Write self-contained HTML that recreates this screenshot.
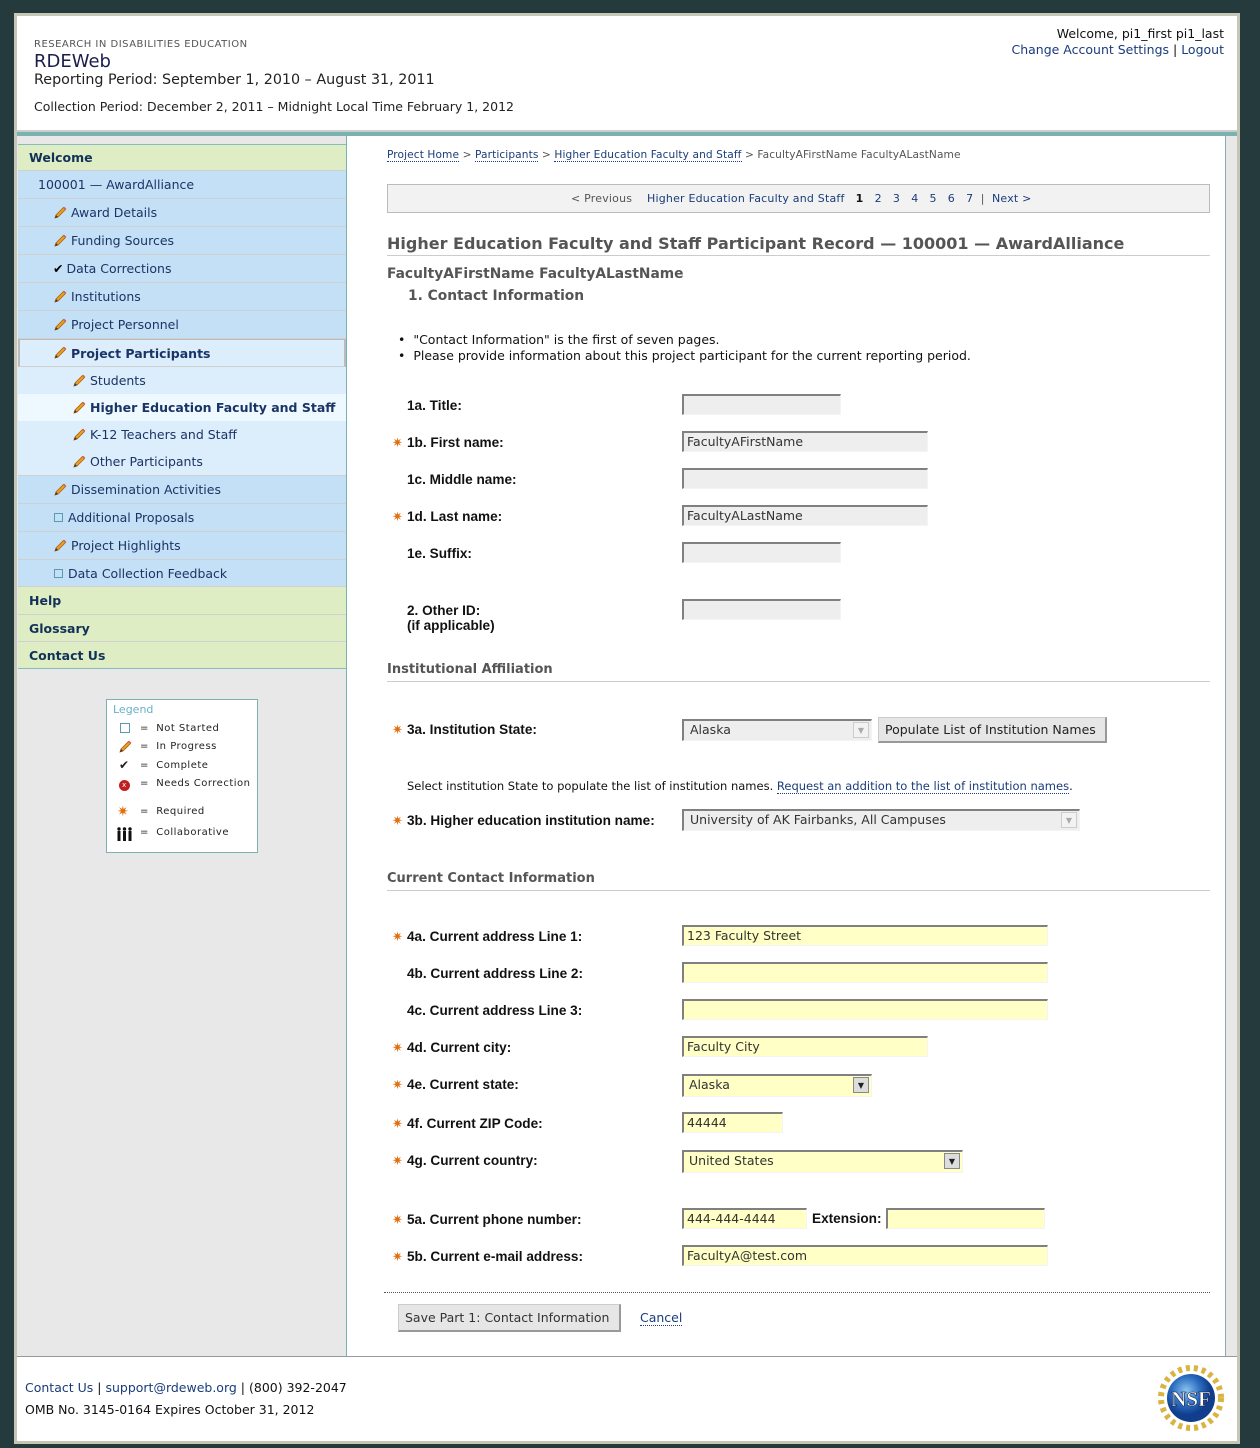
<!DOCTYPE html>
<html><head><meta charset="utf-8"><style>
*{margin:0;padding:0;box-sizing:border-box}
body{width:1260px;height:1448px;background:#253a3c;position:relative;overflow:hidden;font-family:"DejaVu Sans","Liberation Sans",sans-serif;color:#111}
.a{position:absolute;white-space:nowrap}
#box{position:absolute;left:14px;top:13px;width:1226px;height:1431px;background:#fff;border:3px solid #c6c6b6}
.nav{position:absolute;left:18px;width:328px;font-size:12.5px;color:#1a3466;border-bottom:1px solid #d0d0d0;display:flex;align-items:center}
.g{background:#deedc4;font-weight:bold;padding-left:11px;color:#123158}
.b{background:#c3e0f6}
.l{background:#dcedfb}
.pn{width:14px;height:14px;margin-right:4px;flex:none}
.lab{position:absolute;left:407px;font-family:"Liberation Sans",sans-serif;font-weight:bold;font-size:13.6px;color:#111;white-space:nowrap}
.st{position:absolute;left:392px;color:#e07010;font-size:13px;font-weight:bold}
.in{position:absolute;height:21px;background:#eee;border-top:2px solid #808080;border-left:2px solid #808080;border-right:1px solid #f4f4f4;border-bottom:1px solid #f4f4f4;font-family:"DejaVu Sans",sans-serif;font-size:12.5px;color:#333;padding:1px 3px;white-space:nowrap}
.y{background:#ffffc6}
.sel .ar{position:absolute;right:2px;top:1px;width:16px;height:16px;border:1px solid #888;background:#ddd;font-size:8px;text-align:center;line-height:15px;color:#222}
.sec{position:absolute;left:387px;width:823px;font-family:"DejaVu Sans",sans-serif;font-weight:bold;font-size:13px;color:#555;border-bottom:1px solid #ccc;padding-bottom:4px}
a{color:#1a3c7a}
.u{border-bottom:1px dotted #1a3c7a}
</style></head><body>
<svg width="0" height="0" style="position:absolute"><defs><g id="pen"><path d="M2 12 L3 9 L10.5 1.5 L12.5 3.5 L5 11 Z" fill="#f0a020" stroke="#a86010" stroke-width=".8"/><path d="M10.5 1.5 L12.5 3.5 L13.3 2.7 L11.3 0.7Z" fill="#e06060"/><path d="M2 12 L3 9 L5 11Z" fill="#333"/></g></defs></svg>
<div id="box"></div>
<!-- header -->
<div class="a" style="left:34px;top:39px;font-size:10px;color:#555;letter-spacing:.5px">RESEARCH IN DISABILITIES EDUCATION</div>
<div class="a" style="left:34px;top:51px;font-size:18px;color:#1b1e4a">RDEWeb</div>
<div class="a" style="left:34px;top:72px;font-size:14.3px;color:#222">Reporting Period: September 1, 2010 – August 31, 2011</div>
<div class="a" style="left:34px;top:99px;font-size:12.5px;color:#222">Collection Period: December 2, 2011 – Midnight Local Time February 1, 2012</div>
<div class="a" style="right:36px;top:26px;font-size:12.5px;color:#111;text-align:right">Welcome, pi1_first pi1_last</div>
<div class="a" style="right:36px;top:42px;font-size:12.5px;color:#1a3c7a;text-align:right">Change Account Settings <span style="color:#111">|</span> Logout</div>
<div class="a" style="left:17px;top:130px;width:1220px;height:2px;background:#ccc"></div>
<div class="a" style="left:17px;top:132px;width:1220px;height:4px;background:#7ab2b2"></div>
<!-- sidebar -->
<div class="a" style="left:17px;top:136px;width:330px;height:1220px;background:#e8e8e8;border-right:1px solid #7ab2b2"></div>
<div class="a" style="left:1225px;top:136px;width:12px;height:1220px;background:#e8e8e8;border-left:1px solid #8ab"></div>
<div class="nav g" style="top:144px;height:27px;border-top:1px solid #8bb">Welcome</div>
<div class="nav b" style="top:171px;height:28px;padding-left:20px">100001 — AwardAlliance</div>
<div class="nav b" style="top:199px;height:28px;padding-left:35px"><svg class="pn" viewBox="0 0 14 14"><use href="#pen"/></svg>Award Details</div>
<div class="nav b" style="top:227px;height:28px;padding-left:35px"><svg class="pn" viewBox="0 0 14 14"><use href="#pen"/></svg>Funding Sources</div>
<div class="nav b" style="top:255px;height:28px;padding-left:35px"><span style="color:#000;margin-right:3px">✔</span>Data Corrections</div>
<div class="nav b" style="top:283px;height:28px;padding-left:35px"><svg class="pn" viewBox="0 0 14 14"><use href="#pen"/></svg>Institutions</div>
<div class="nav b" style="top:311px;height:28px;padding-left:35px"><svg class="pn" viewBox="0 0 14 14"><use href="#pen"/></svg>Project Personnel</div>
<div class="nav l" style="top:339px;height:28px;padding-left:33px;font-weight:bold;border-left:2px solid #bbb;border-right:2px solid #bbb;border-top:1px solid #bbb"><svg class="pn" viewBox="0 0 14 14"><use href="#pen"/></svg>Project Participants</div>
<div class="nav l" style="top:367px;height:27px;padding-left:54px;border-bottom:none"><svg class="pn" viewBox="0 0 14 14"><use href="#pen"/></svg>Students</div>
<div class="nav" style="top:394px;height:27px;padding-left:54px;background:#eef8ff;font-weight:bold;border-bottom:none"><svg class="pn" viewBox="0 0 14 14"><use href="#pen"/></svg>Higher Education Faculty and Staff</div>
<div class="nav l" style="top:421px;height:27px;padding-left:54px;border-bottom:none"><svg class="pn" viewBox="0 0 14 14"><use href="#pen"/></svg>K-12 Teachers and Staff</div>
<div class="nav l" style="top:448px;height:28px;padding-left:54px"><svg class="pn" viewBox="0 0 14 14"><use href="#pen"/></svg>Other Participants</div>
<div class="nav b" style="top:476px;height:28px;padding-left:35px"><svg class="pn" viewBox="0 0 14 14"><use href="#pen"/></svg>Dissemination Activities</div>
<div class="nav b" style="top:504px;height:28px;padding-left:36px"><span style="display:inline-block;width:9px;height:9px;border:1px solid #5a9ab0;margin-right:5px"></span>Additional Proposals</div>
<div class="nav b" style="top:532px;height:28px;padding-left:35px"><svg class="pn" viewBox="0 0 14 14"><use href="#pen"/></svg>Project Highlights</div>
<div class="nav b" style="top:560px;height:27px;padding-left:36px"><span style="display:inline-block;width:9px;height:9px;border:1px solid #5a9ab0;margin-right:5px"></span>Data Collection Feedback</div>
<div class="nav g" style="top:587px;height:28px">Help</div>
<div class="nav g" style="top:615px;height:27px">Glossary</div>
<div class="nav g" style="top:642px;height:27px;border-bottom:1px solid #8bb">Contact Us</div>
<!-- legend -->
<div class="a" style="left:106px;top:699px;width:152px;height:154px;background:#fff;border:1px solid #7ab2b2;font-size:10px;color:#222;letter-spacing:.5px">
<div class="a" style="left:6px;top:3px;color:#6ab0c8;font-size:11px;letter-spacing:0">Legend</div>
<div class="a" style="left:13px;top:23px"><span style="display:inline-block;width:10px;height:10px;border:1.5px solid #5a9ab0"></span></div>
<svg class="a" style="left:11px;top:40px" width="14" height="14" viewBox="0 0 14 14"><use href="#pen"/></svg>
<div class="a" style="left:12px;top:58px;font-size:12px">✔</div>
<div class="a" style="left:12px;top:80px;width:11px;height:11px;border-radius:50%;background:#c02020;color:#fff;font-size:7px;text-align:center;line-height:11px">x</div>
<div class="a" style="left:10px;top:104px;color:#e07010;font-size:14px">✷</div>
<svg class="a" style="left:9px;top:127px" width="17" height="14" viewBox="0 0 17 14"><g fill="#111"><circle cx="3" cy="2" r="1.7"/><circle cx="8.5" cy="2" r="1.7"/><circle cx="14" cy="2" r="1.7"/><rect x="1.5" y="4" width="3" height="10"/><rect x="7" y="4" width="3" height="10"/><rect x="12.5" y="4" width="3" height="10"/></g></svg>
<div class="a" style="left:33px;top:23px">=&nbsp;&nbsp;Not Started</div>
<div class="a" style="left:33px;top:41px">=&nbsp;&nbsp;In Progress</div>
<div class="a" style="left:33px;top:60px">=&nbsp;&nbsp;Complete</div>
<div class="a" style="left:33px;top:78px">=&nbsp;&nbsp;Needs Correction</div>
<div class="a" style="left:33px;top:106px">=&nbsp;&nbsp;Required</div>
<div class="a" style="left:33px;top:127px">=&nbsp;&nbsp;Collaborative</div>
</div>
<!-- content -->
<div class="a" style="left:387px;top:149px;font-size:10.6px;color:#555;letter-spacing:.1px"><a class="u" style="text-decoration:none">Project Home</a> &gt; <a class="u" style="text-decoration:none">Participants</a> &gt; <a class="u" style="text-decoration:none">Higher Education Faculty and Staff</a> &gt; FacultyAFirstName FacultyALastName</div>
<div class="a" style="left:387px;top:184px;width:823px;height:29px;background:#f2f2f2;border:1px solid #bbb"></div>
<div class="a" style="left:571px;top:192px;font-size:11px;color:#555;letter-spacing:.2px">&lt; Previous&nbsp;&nbsp;&nbsp;&nbsp;<a>Higher Education Faculty and Staff</a>&nbsp;&nbsp;&nbsp;<b style="color:#111">1</b>&nbsp;&nbsp;&nbsp;<a>2</a>&nbsp;&nbsp;&nbsp;<a>3</a>&nbsp;&nbsp;&nbsp;<a>4</a>&nbsp;&nbsp;&nbsp;<a>5</a>&nbsp;&nbsp;&nbsp;<a>6</a>&nbsp;&nbsp;&nbsp;<a>7</a>&nbsp;&nbsp;|&nbsp;&nbsp;<a>Next &gt;</a></div>
<div class="a" style="left:387px;top:234px;width:823px;font-size:16px;font-weight:bold;color:#555;border-bottom:1px solid #ccc;padding-bottom:2px">Higher Education Faculty and Staff Participant Record — 100001 — AwardAlliance</div>
<div class="a" style="left:387px;top:266px;font-size:13.8px;font-weight:bold;color:#555">FacultyAFirstName FacultyALastName</div>
<div class="a" style="left:408px;top:288px;font-size:13.8px;font-weight:bold;color:#555">1. Contact Information</div>
<div class="a" style="left:398px;top:332px;font-size:12.5px;line-height:16px">•&nbsp;&nbsp;"Contact Information" is the first of seven pages.<br>•&nbsp;&nbsp;Please provide information about this project participant for the current reporting period.</div>

<div class="lab" style="top:398px">1a. Title:</div><div class="in" style="left:682px;top:394px;width:159px"></div>
<div class="st" style="top:436px">✷</div><div class="lab" style="top:435px">1b. First name:</div><div class="in" style="left:682px;top:431px;width:246px">FacultyAFirstName</div>
<div class="lab" style="top:472px">1c. Middle name:</div><div class="in" style="left:682px;top:468px;width:246px"></div>
<div class="st" style="top:510px">✷</div><div class="lab" style="top:509px">1d. Last name:</div><div class="in" style="left:682px;top:505px;width:246px">FacultyALastName</div>
<div class="lab" style="top:546px">1e. Suffix:</div><div class="in" style="left:682px;top:542px;width:159px"></div>
<div class="lab" style="top:603px;line-height:15px">2. Other ID:<br>(if applicable)</div><div class="in" style="left:682px;top:599px;width:159px"></div>

<div class="sec" style="top:662px">Institutional Affiliation</div>
<div class="st" style="top:723px">✷</div><div class="lab" style="top:722px">3a. Institution State:</div>
<div class="in sel" style="left:682px;top:719px;width:190px;height:22px;padding-left:6px">Alaska<span class="ar" style="background:#f2f2f2;color:#aaa;border-color:#ccc">▼</span></div>
<div class="a" style="left:878px;top:717px;width:229px;height:26px;background:#e6e6e6;border:1px solid #ccc;border-right:2px solid #999;border-bottom:2px solid #999;font-size:12.5px;color:#222;padding:4px 6px">Populate List of Institution Names</div>
<div class="a" style="left:407px;top:779px;font-size:11.5px;color:#111">Select institution State to populate the list of institution names. <a class="u" style="text-decoration:none">Request an addition to the list of institution names</a>.</div>
<div class="st" style="top:814px">✷</div><div class="lab" style="top:813px">3b. Higher education institution name:</div>
<div class="in sel" style="left:682px;top:809px;width:398px;height:22px;padding-left:6px">University of AK Fairbanks, All Campuses<span class="ar" style="background:#f2f2f2;color:#aaa;border-color:#ccc">▼</span></div>

<div class="sec" style="top:871px">Current Contact Information</div>
<div class="st" style="top:930px">✷</div><div class="lab" style="top:929px">4a. Current address Line 1:</div><div class="in y" style="left:682px;top:925px;width:366px">123 Faculty Street</div>
<div class="lab" style="top:966px">4b. Current address Line 2:</div><div class="in y" style="left:682px;top:962px;width:366px"></div>
<div class="lab" style="top:1003px">4c. Current address Line 3:</div><div class="in y" style="left:682px;top:999px;width:366px"></div>
<div class="st" style="top:1041px">✷</div><div class="lab" style="top:1040px">4d. Current city:</div><div class="in y" style="left:682px;top:1036px;width:246px">Faculty City</div>
<div class="st" style="top:1078px">✷</div><div class="lab" style="top:1077px">4e. Current state:</div><div class="in y sel" style="left:682px;top:1074px;width:190px;height:23px;padding-left:5px">Alaska<span class="ar">▼</span></div>
<div class="st" style="top:1117px">✷</div><div class="lab" style="top:1116px">4f. Current ZIP Code:</div><div class="in y" style="left:682px;top:1112px;width:101px">44444</div>
<div class="st" style="top:1154px">✷</div><div class="lab" style="top:1153px">4g. Current country:</div><div class="in y sel" style="left:682px;top:1150px;width:281px;height:23px;padding-left:5px">United States<span class="ar">▼</span></div>
<div class="st" style="top:1213px">✷</div><div class="lab" style="top:1212px">5a. Current phone number:</div><div class="in y" style="left:682px;top:1208px;width:125px">444-444-4444</div>
<div class="lab" style="left:812px;top:1211px">Extension:</div><div class="in y" style="left:886px;top:1208px;width:159px"></div>
<div class="st" style="top:1250px">✷</div><div class="lab" style="top:1249px">5b. Current e-mail address:</div><div class="in y" style="left:682px;top:1245px;width:366px">FacultyA@test.com</div>
<div class="a" style="left:384px;top:1292px;width:826px;border-top:1px dotted #555"></div>
<div class="a" style="left:398px;top:1304px;width:223px;height:28px;background:#e6e6e6;border:1px solid #ccc;border-right:2px solid #999;border-bottom:2px solid #999;font-size:12.5px;color:#333;padding:5px 6px">Save Part 1: Contact Information</div>
<div class="a" style="left:640px;top:1310px;font-size:12.5px;color:#1a3c7a;border-bottom:1px dotted #1a3c7a;line-height:15px">Cancel</div>
<!-- footer -->
<div class="a" style="left:17px;top:1356px;width:1220px;height:1px;background:#999"></div>
<div class="a" style="left:25px;top:1380px;font-size:12.5px;color:#111"><span style="color:#1a3c7a">Contact Us</span> | <span style="color:#1a3c7a">support@rdeweb.org</span> | (800) 392-2047</div>
<div class="a" style="left:25px;top:1402px;font-size:12.5px;color:#111">OMB No. 3145-0164 Expires October 31, 2012</div>
<svg class="a" style="left:1158px;top:1365px" width="66" height="66" viewBox="0 0 66 66">
<circle cx="33" cy="33" r="30" fill="none" stroke="#d9b440" stroke-width="6" stroke-dasharray="4 4"/>
<defs><radialGradient id="gl" cx="40%" cy="35%"><stop offset="0" stop-color="#8cc4ef"/><stop offset=".6" stop-color="#2a6cc0"/><stop offset="1" stop-color="#103e8c"/></radialGradient></defs>
<circle cx="33" cy="33" r="24" fill="url(#gl)"/>
<text x="33" y="41" text-anchor="middle" font-family="Liberation Serif,serif" font-weight="bold" font-size="21" fill="#fff" stroke="#113" stroke-width=".5">NSF</text>
</svg>
</body></html>
